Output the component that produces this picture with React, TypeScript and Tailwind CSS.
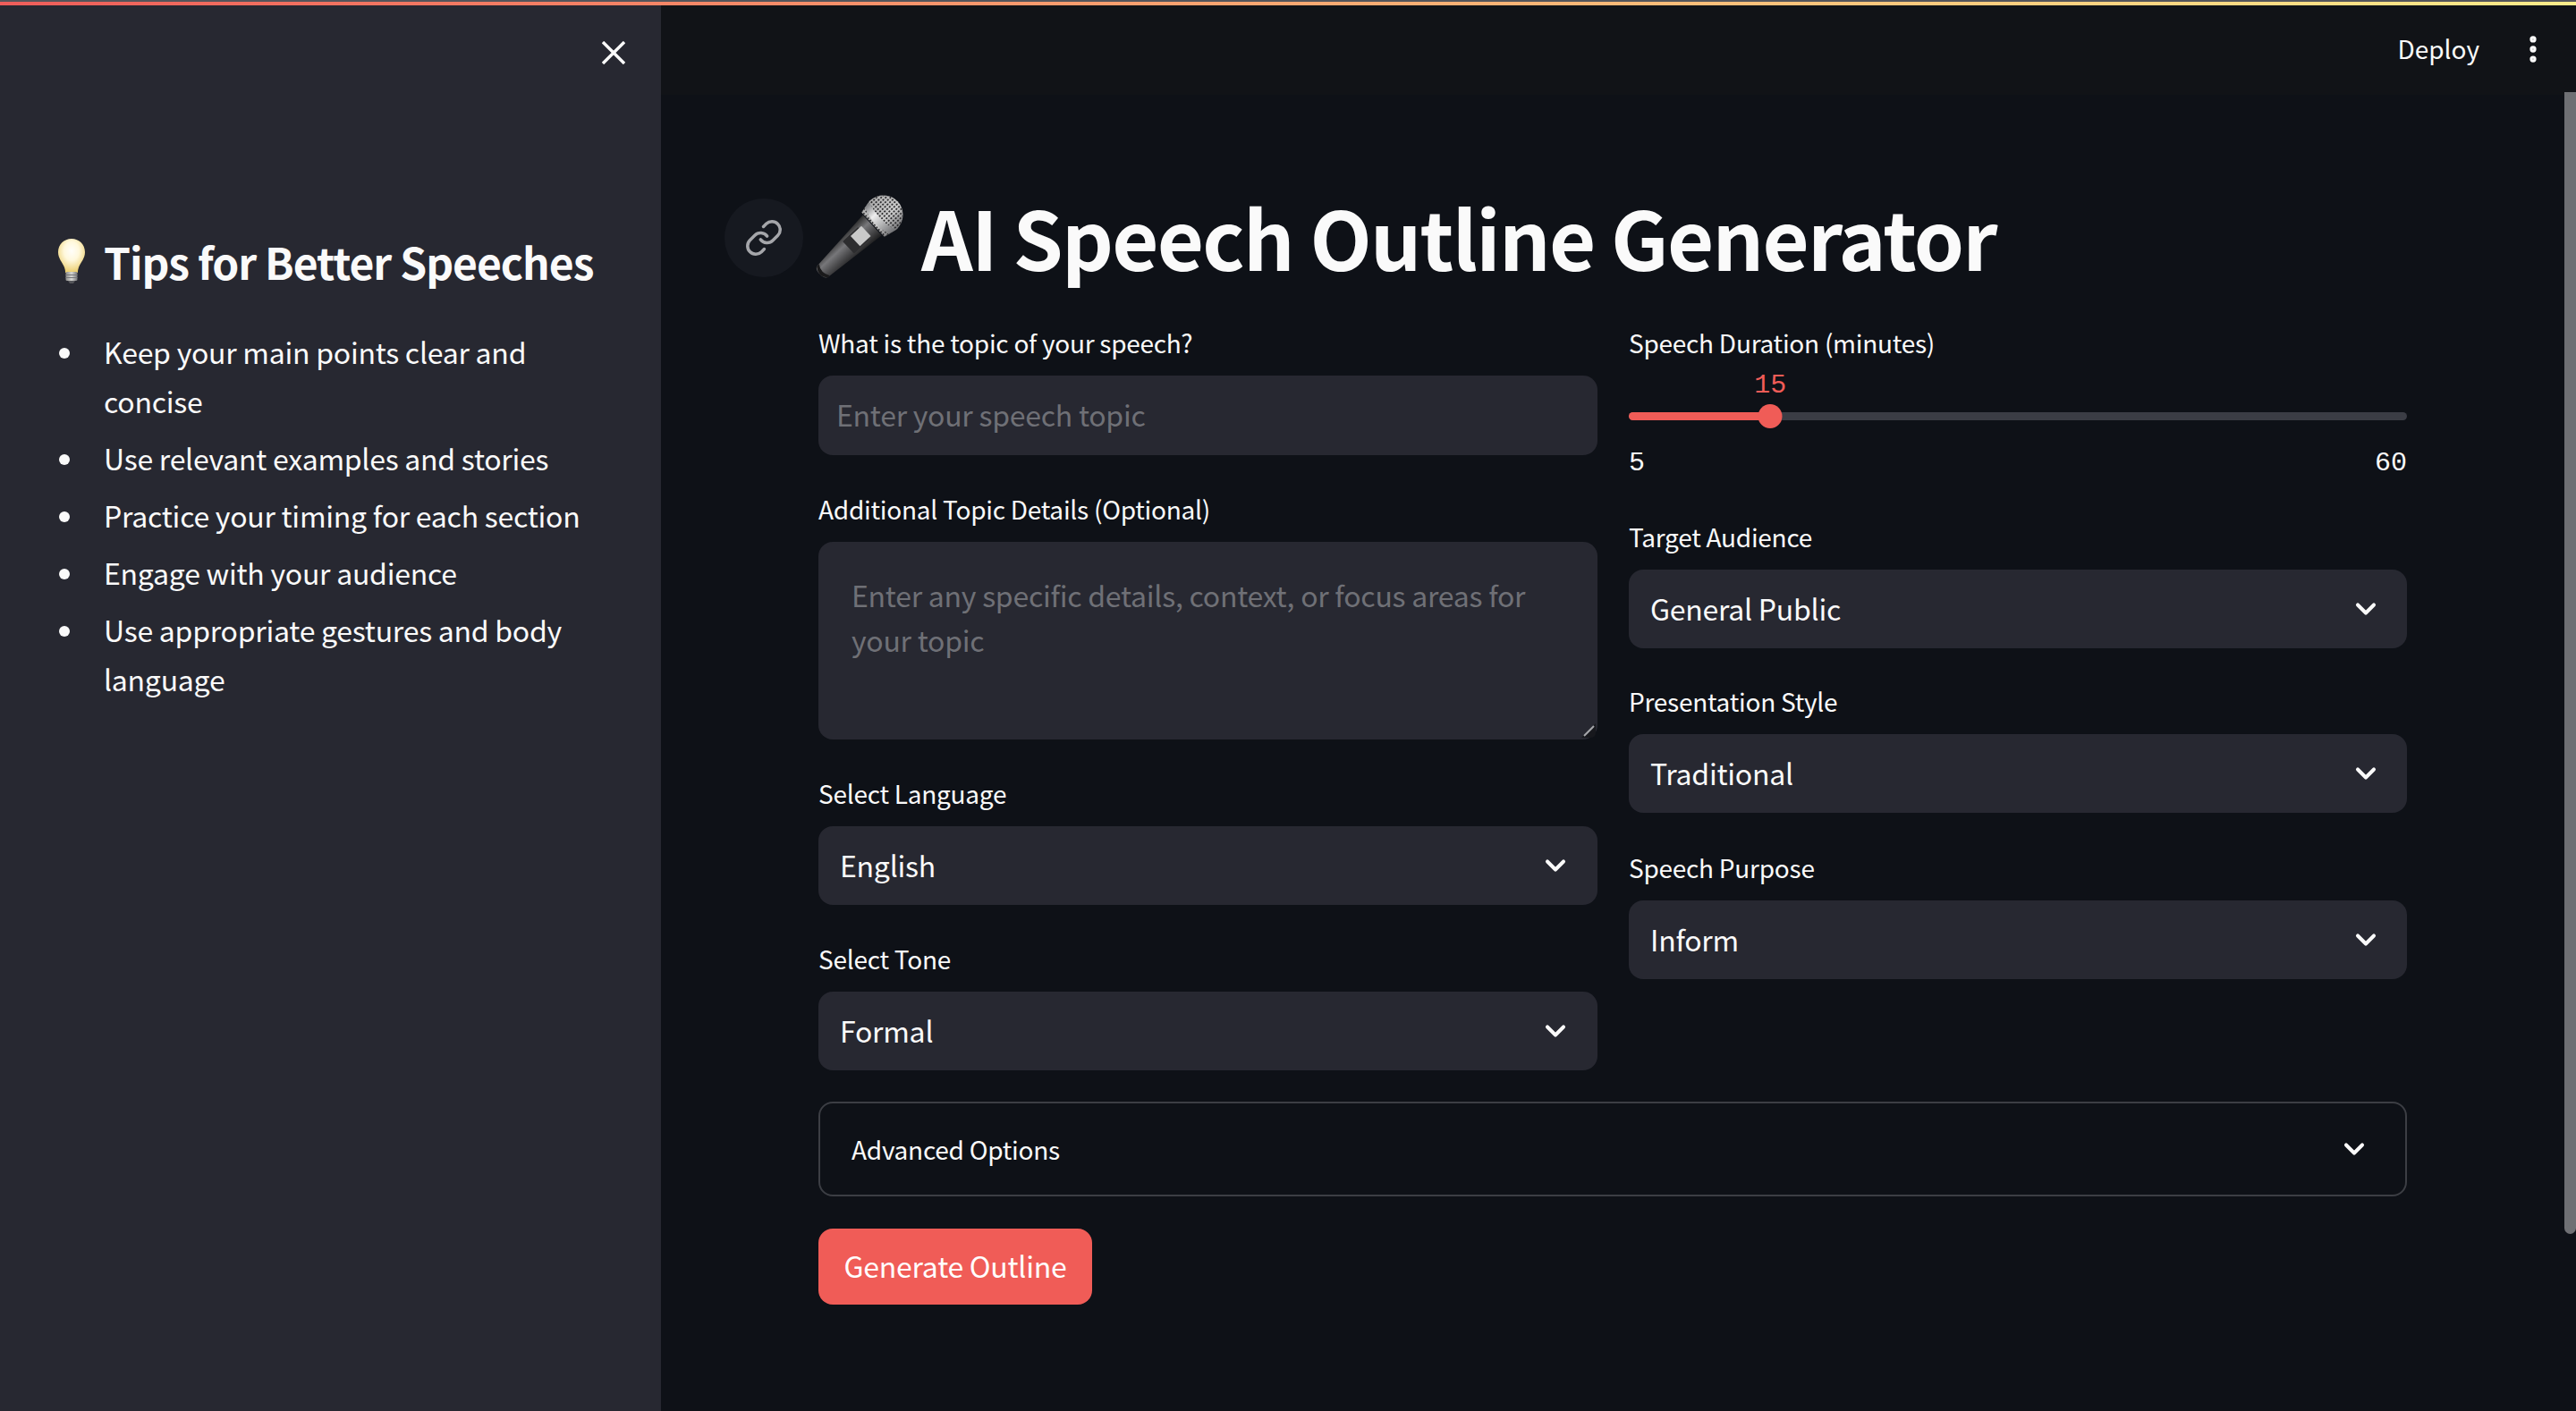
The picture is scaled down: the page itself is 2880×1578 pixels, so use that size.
import React from 'react';
import { ChevronDown, EllipsisVertical, Link } from 'lucide-react';

const tips = [
  'Keep your main points clear and concise',
  'Use relevant examples and stories',
  'Practice your timing for each section',
  'Engage with your audience',
  'Use appropriate gestures and body language',
];

const sans = "font-['Noto_Sans_CJK_SC','Noto_Sans',sans-serif]";

const Bulb = () => (
  <svg width="32" height="52" viewBox="0 0 32 52" className="shrink-0">
    <defs>
      <radialGradient id="glass" cx="50%" cy="36%" r="62%">
        <stop offset="0%" stopColor="#fffefa" />
        <stop offset="45%" stopColor="#fff8dc" />
        <stop offset="100%" stopColor="#eccf72" />
      </radialGradient>
      <linearGradient id="screw" x1="0" x2="1" y1="0" y2="0">
        <stop offset="0%" stopColor="#8a8a88" />
        <stop offset="50%" stopColor="#d8d8d4" />
        <stop offset="100%" stopColor="#77777a" />
      </linearGradient>
    </defs>
    <path d="M16 1C7.5 1 1 7.5 1 16c0 7 4.5 11 7 17 .8 2 1 4 1.2 6h13.6c.2-2 .4-4 1.2-6 2.5-6 7-10 7-17C31 7.5 24.500 1 16 1z" fill="url(#glass)" />
    <rect x="9.500" y="38" width="13" height="10" rx="1.500" fill="url(#screw)" />
    <rect x="9.500" y="41" width="13" height="1" fill="#77777a" />
    <rect x="9.500" y="44" width="13" height="1" fill="#77777a" />
    <path d="M12 48h8l-2 3h-4z" fill="#55565a" />
  </svg>
);

const Mic = () => (
  <svg width="96" height="96" viewBox="0 0 96 96" className="shrink-0 overflow-visible">
    <defs>
      <linearGradient id="body" x1="0" x2="1" y1="0" y2="0">
        <stop offset="0%" stopColor="#2c2c2c" />
        <stop offset="35%" stopColor="#77777a" />
        <stop offset="65%" stopColor="#4d4d4f" />
        <stop offset="100%" stopColor="#1e1e1f" />
      </linearGradient>
      <linearGradient id="ring" x1="0" x2="1" y1="0" y2="0">
        <stop offset="0%" stopColor="#77787b" />
        <stop offset="35%" stopColor="#eeeeee" />
        <stop offset="100%" stopColor="#6f7073" />
      </linearGradient>
      <linearGradient id="head" x1="0" x2="1" y1="0" y2="0">
        <stop offset="0%" stopColor="#b0b0b0" />
        <stop offset="60%" stopColor="#d2d2d2" />
        <stop offset="100%" stopColor="#77777a" />
      </linearGradient>
      <pattern id="mesh" width="3.200" height="3.200" patternUnits="userSpaceOnUse">
        <circle cx="1.600" cy="1.600" r="0.950" fill="#2a2a2c" />
      </pattern>
    </defs>
    <g transform="translate(73 21) rotate(47) scale(1.1 1.18)">
      <path d="M-14 16 L14 16 L8 80 Q7.500 84 0 84 Q-7.500 84 -8 80 Z" fill="url(#body)" />
      <path d="M-8 78 Q0 83 8 78 L7.800 81 Q0 87 -7.800 81 Z" fill="#1a1a1b" />
      <path d="M-20 2 A20 19 0 0 1 20 2 L17 15 L-17 15 Z" fill="url(#head)" />
      <path d="M-20 2 A20 19 0 0 1 20 2 L17 15 L-17 15 Z" fill="url(#mesh)" />
      <path d="M-19.500 3 Q0 9 19.500 3 L18 10 Q0 16 -18 10 Z" fill="url(#ring)" />
      <rect x="-8.500" y="27" width="17" height="20" rx="1" fill="#2d2d2f" />
      <rect x="-7" y="24" width="14" height="14" fill="#c9c9c9" />
    </g>
  </svg>
);

const Label = ({ children }: { children: React.ReactNode }) => (
  <div className="h-10 mb-[15px] text-[28px] leading-[36px] tracking-[-0.25px] text-[#fafafa]">{children}</div>
);

const Select = ({ label, value, className, pad }: { label: string; value: string; className?: string; pad: string }) => (
  <div className={className}>
    <Label>{label}</Label>
    <div className={`h-[88px] rounded-2xl bg-[#272831] pl-6 ${pad} flex items-center justify-between text-[32px] tracking-[-0.25px] text-[#fafafa]`}>
      <span className="mb-[3px]">{value}</span>
      <ChevronDown size={36} strokeWidth={2.7} />
    </div>
  </div>
);

const Slider = ({ min, max, value }: { min: number; max: number; value: number }) => {
  const pct = ((value - min) / (max - min)) * 100;
  return (
    <div className="mb-[47px]">
      <div className="relative mt-[56px] h-[9px] rounded-full bg-[#3b3d45]">
        <div className="h-full rounded-full bg-[#f05c57]" style={{ width: `${pct}%` }} />
        <div
          className="absolute top-[-9px] h-[27px] w-[27px] -translate-x-1/2 rounded-full bg-[#f05c57]"
          style={{ left: `${pct}%` }}
        />
        <div
          className="absolute top-[-48px] -translate-x-1/2 font-['Liberation_Mono',monospace] text-[30px] leading-9 text-[#f05c57]"
          style={{ left: `${pct}%` }}
        >
          {value}
        </div>
      </div>
      <div className="mt-[30px] mb-[-1px] flex justify-between font-['Liberation_Mono',monospace] text-[30px] leading-9 text-[#fafafa]">
        <span>{min}</span>
        <span>{max}</span>
      </div>
    </div>
  );
};

export default function App() {
  return (
    <div className={`relative h-[1578px] w-full overflow-hidden bg-[#0e1117] ${sans}`}>
      {/* decoration strip */}
      <div className="h-0.5 bg-[#54555b]" />
      <div className="h-1 bg-gradient-to-r from-[#ee5d5a] to-[#fdec8a]" />

      <div className="flex h-[1572px]">
        {/* Sidebar */}
        <aside className="w-[739px] shrink-0 bg-[#272831] pl-16 pr-[40px]">
          <div className="flex justify-end pt-10">
            <svg width="26" height="26" viewBox="0 0 26 26" fill="none" stroke="#fafafa" strokeWidth="3.4">
              <path d="M1 1l24 24M25 1L1 25" />
            </svg>
          </div>
          <div className="mt-[189px] flex items-center gap-5">
            <Bulb />
            <h3 className="whitespace-nowrap text-[48px] font-semibold leading-[62px] tracking-[-1px] text-[#fafafa]">
              Tips for Better Speeches
            </h3>
          </div>
          <ul className="mt-[43px] flex flex-col gap-[9px] pr-[19px]">
            {tips.map(tip => (
              <li key={tip} className="flex text-[32px] leading-[55px] tracking-[-0.25px] text-[#fafafa]">
                <span className="ml-[2px] mr-[38px] mt-[23px] h-3 w-3 shrink-0 rounded-full bg-[#fafafa]" />
                <span>{tip}</span>
              </li>
            ))}
          </ul>
        </aside>

        {/* Main */}
        <main className="min-w-0 flex-1">
          <header className="flex h-[100px] items-start justify-end bg-[#111317] pt-[26px] pr-[29px]">
            <span className="mr-[41px] text-[28px] leading-[44px] text-[#fafafa]">Deploy</span>
            <EllipsisVertical size={38} strokeWidth={2.6} className="mt-[4px] text-[#fafafa]" />
          </header>

          <div className="pl-[176px] pr-[189px]">
            <div className="ml-[-105px] mt-[110px] flex h-[100px] items-center">
              <div className="flex h-[88px] w-[88px] shrink-0 items-center justify-center rounded-full bg-[#161920]">
                <Link size={44} strokeWidth={1.9} className="text-[#a5a6aa]" />
              </div>
              <div className="ml-[18px]">
                <Mic />
              </div>
              <h1 className="mb-[5px] ml-[18px] whitespace-nowrap text-[90px] font-bold leading-[92px] tracking-[-1.75px] text-[#fafafa]">
                AI Speech Outline Generator
              </h1>
            </div>

            <div className="mt-[49px] grid grid-cols-[871px_870px] gap-x-[35px]">
              <div>
                <Label>What is the topic of your speech?</Label>
                <input
                  placeholder="Enter your speech topic"
                  className="h-[89px] w-full rounded-2xl bg-[#272831] px-5 pb-[3px] text-[32px] tracking-[-0.25px] text-[#fafafa] outline-none placeholder:text-[#6f7076]"
                />
                <div className="mt-[42px]">
                  <Label>Additional Topic Details (Optional)</Label>
                  <div className="relative">
                    <textarea
                      placeholder="Enter any specific details, context, or focus areas for your topic"
                      className="block h-[221px] w-full resize-none rounded-2xl bg-[#272831] px-[37px] pb-6 pt-[34px] text-[32px] leading-[50px] tracking-[-0.25px] text-[#fafafa] outline-none placeholder:text-[#6f7076]"
                    />
                    <svg width="16" height="16" viewBox="0 0 16 16" className="absolute bottom-[2px] right-[2px]">
                      <path d="M16 0V10Q16 16 10 16H0Z" fill="#17181d" />
                      <path d="M3 14L14 3" stroke="#a6a7ab" strokeWidth="2" />
                    </svg>
                  </div>
                </div>
                <Select label="Select Language" value="English" className="mt-[42px]" pad="pr-[29px]" />
                <Select label="Select Tone" value="Formal" className="mt-[42px]" pad="pr-[29px]" />
              </div>

              <div>
                <div className="h-10 text-[28px] leading-[36px] tracking-[-0.25px] text-[#fafafa]">Speech Duration (minutes)</div>
                <Slider min={5} max={60} value={15} />
                <Select label="Target Audience" value="General Public" pad="pr-[28px]" />
                <Select label="Presentation Style" value="Traditional" className="mt-[41px]" pad="pr-[28px]" />
                <Select label="Speech Purpose" value="Inform" className="mt-[43px]" pad="pr-[28px]" />
              </div>
            </div>

            <div className="mt-[35px] flex h-[106px] items-center justify-between rounded-2xl border-2 border-[#3c3e44] pl-[35px] pr-[39px] text-[28px] tracking-[-0.25px] text-[#fafafa]">
              <span>Advanced Options</span>
              <ChevronDown size={36} strokeWidth={2.7} />
            </div>

            <button className="mt-[36px] h-[85px] w-[306px] rounded-2xl bg-[#f05c57] pb-[3px] text-[32px] tracking-[-0.25px] text-white">
              Generate Outline
            </button>
          </div>
        </main>
      </div>

      {/* overlay scrollbar */}
      <div className="absolute right-0 top-[103px] h-[1277px] w-[13px] rounded-b-full bg-[#6f7074]" />
    </div>
  );
}
